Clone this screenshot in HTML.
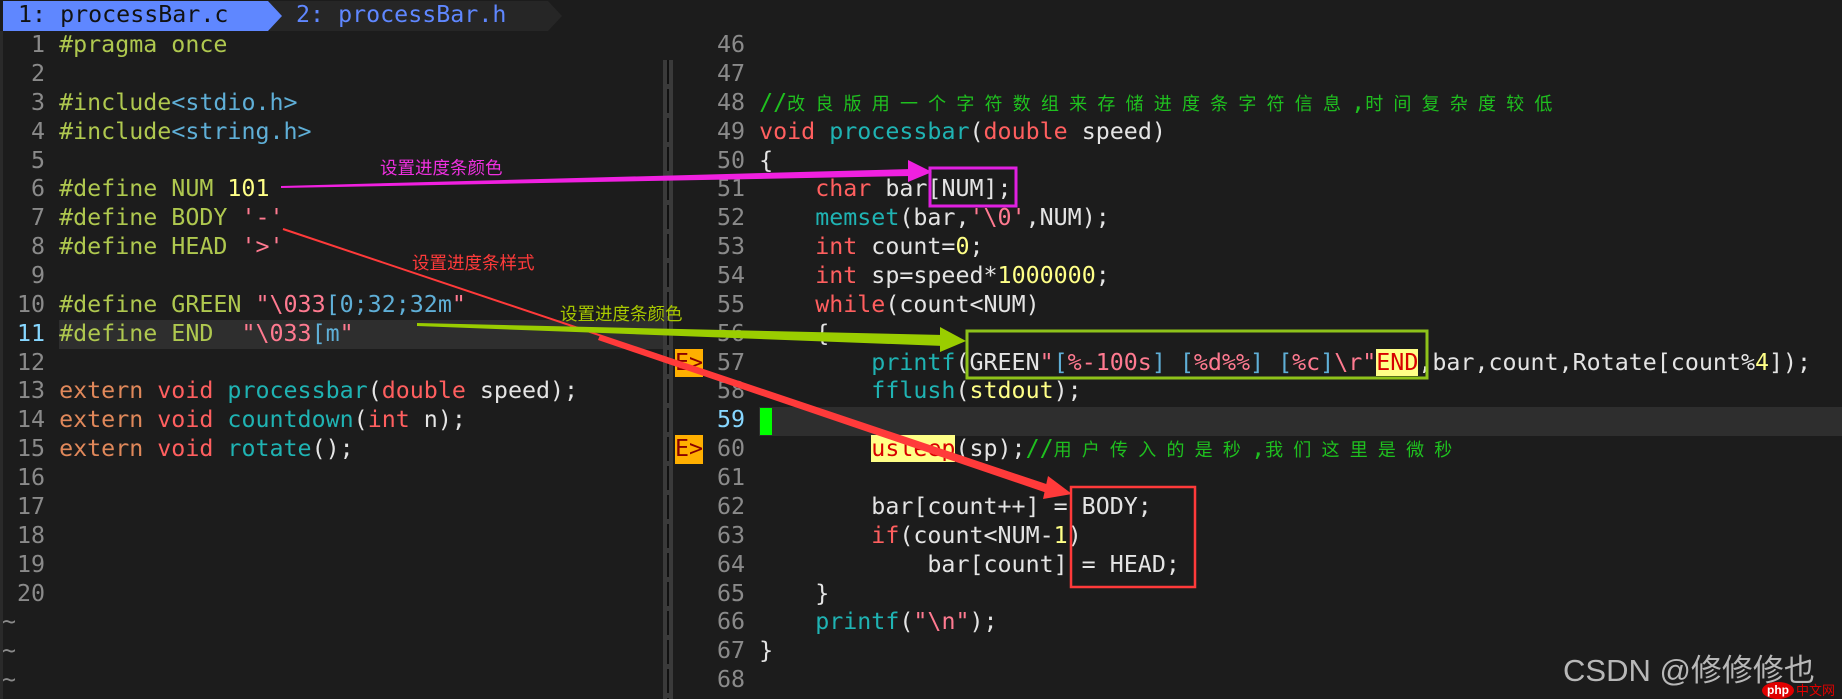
<!DOCTYPE html>
<html><head><meta charset="utf-8"><style>
body{margin:0;width:1842px;height:699px;background:#1c1c1c;overflow:hidden;position:relative;font-family:"DejaVu Sans Mono","Liberation Mono","Noto Sans CJK SC",monospace;font-size:23.3px;color:#e4e4e4}
.r{position:absolute;height:28.87px;line-height:28.87px;white-space:pre}
.n{color:#8a8a8a}.cn{color:#87d7ff}
.pp{color:#afc84f}.st{color:#5fafd7}.nu{color:#ffff87}.ch{color:#ff7a90}
.kw{color:#ff5f5f}.ex{color:#e0885a}.fn{color:#1fb3b3}.cm{color:#1fc01f}
.cj{font-size:18px;letter-spacing:10.2px}
.hl{background:#ffff87;color:#d70000}
.sign{background:#ffaf00;color:#870000}
.ann{position:absolute;font-family:"Liberation Sans","Noto Sans CJK SC",sans-serif;font-size:17.5px;white-space:nowrap}
</style></head><body>
<div style="position:absolute;left:0;top:0;width:1842px;height:31px;background:#1c1c1c"></div>
<svg style="position:absolute;left:0;top:0" width="600" height="32">
<polygon points="270,1 548,1 562,16 548,31 270,31" fill="#262626"/>
<polygon points="3,1 268,1 282,16 268,31 3,31" fill="#5f87ff"/>
</svg>
<div class="r" style="left:18px;top:1px;color:#121212">1: processBar.c</div>
<div class="r" style="left:296px;top:1px;color:#5f87ff">2: processBar.h</div>
<div style="position:absolute;left:0;top:31px;width:3px;height:668px;background:#2a2a2a"></div>
<div style="position:absolute;left:59px;top:320px;width:604px;height:29px;background:#2e2e2e"></div>
<div style="position:absolute;left:759px;top:407px;width:1083px;height:29px;background:#2e2e2e"></div>
<div style="position:absolute;left:663px;top:60px;width:10px;height:639px;background:#3a3a3a"></div>
<div style="position:absolute;left:667px;top:60px;width:2px;height:639px;background:repeating-linear-gradient(#111 0 24px,#3a3a3a 24px 29px)"></div>

<div class="r" style="left:17px;top:31px"><span class="n"> 1</span> <span class="pp">#pragma once</span></div>
<div class="r" style="left:17px;top:59.9px"><span class="n"> 2</span></div>
<div class="r" style="left:17px;top:88.7px"><span class="n"> 3</span> <span class="pp">#include</span><span class="st">&lt;stdio.h&gt;</span></div>
<div class="r" style="left:17px;top:117.6px"><span class="n"> 4</span> <span class="pp">#include</span><span class="st">&lt;string.h&gt;</span></div>
<div class="r" style="left:17px;top:146.5px"><span class="n"> 5</span></div>
<div class="r" style="left:17px;top:175.4px"><span class="n"> 6</span> <span class="pp">#define NUM </span><span class="nu">101</span></div>
<div class="r" style="left:17px;top:204.2px"><span class="n"> 7</span> <span class="pp">#define BODY </span><span class="ch">'-'</span></div>
<div class="r" style="left:17px;top:233.1px"><span class="n"> 8</span> <span class="pp">#define HEAD </span><span class="ch">'&gt;'</span></div>
<div class="r" style="left:17px;top:262px"><span class="n"> 9</span></div>
<div class="r" style="left:17px;top:290.8px"><span class="n">10</span> <span class="pp">#define GREEN </span><span class="ch">"\033</span><span class="st">[0;32;32m</span><span class="ch">"</span></div>
<div class="r" style="left:17px;top:319.7px"><span class="cn">11</span> <span class="pp">#define END  </span><span class="ch">"\033</span><span class="st">[m</span><span class="ch">"</span></div>
<div class="r" style="left:17px;top:348.6px"><span class="n">12</span></div>
<div class="r" style="left:17px;top:377.4px"><span class="n">13</span> <span class="ex">extern</span> <span class="kw">void</span> <span class="fn">processbar</span>(<span class="kw">double</span> speed);</div>
<div class="r" style="left:17px;top:406.3px"><span class="n">14</span> <span class="ex">extern</span> <span class="kw">void</span> <span class="fn">countdown</span>(<span class="kw">int</span> n);</div>
<div class="r" style="left:17px;top:435.2px"><span class="n">15</span> <span class="ex">extern</span> <span class="kw">void</span> <span class="fn">rotate</span>();</div>
<div class="r" style="left:17px;top:464px"><span class="n">16</span></div>
<div class="r" style="left:17px;top:492.9px"><span class="n">17</span></div>
<div class="r" style="left:17px;top:521.8px"><span class="n">18</span></div>
<div class="r" style="left:17px;top:550.7px"><span class="n">19</span></div>
<div class="r" style="left:17px;top:579.5px"><span class="n">20</span></div>
<div class="r n" style="left:2px;top:608.4px">~</div>
<div class="r n" style="left:2px;top:637.3px">~</div>
<div class="r n" style="left:2px;top:666.1px">~</div>

<div class="r" style="left:717px;top:31px"><span class="n">46</span></div>
<div class="r" style="left:717px;top:59.9px"><span class="n">47</span></div>
<div class="r" style="left:717px;top:88.7px"><span class="n">48</span> <span class="cm">//<span class="cj">改良版用一个字符数组来存储进度条字符信息</span>,<span class="cj">时间复杂度较低</span></span></div>
<div class="r" style="left:717px;top:117.6px"><span class="n">49</span> <span class="kw">void</span> <span class="fn">processbar</span>(<span class="kw">double</span> speed)</div>
<div class="r" style="left:717px;top:146.5px"><span class="n">50</span> {</div>
<div class="r" style="left:717px;top:175.4px"><span class="n">51</span>     <span class="kw">char</span> bar[NUM];</div>
<div class="r" style="left:717px;top:204.2px"><span class="n">52</span>     <span class="fn">memset</span>(bar,<span class="ch">'\0'</span>,NUM);</div>
<div class="r" style="left:717px;top:233.1px"><span class="n">53</span>     <span class="kw">int</span> count=<span class="nu">0</span>;</div>
<div class="r" style="left:717px;top:262px"><span class="n">54</span>     <span class="kw">int</span> sp=speed*<span class="nu">1000000</span>;</div>
<div class="r" style="left:717px;top:290.8px"><span class="n">55</span>     <span class="kw">while</span>(count&lt;NUM)</div>
<div class="r" style="left:717px;top:319.7px"><span class="n">56</span>     {</div>
<div class="r" style="left:717px;top:348.6px"><span class="n">57</span>         <span class="fn">printf</span>(GREEN<span class="ch">"</span><span class="st">[</span><span class="ch">%-100s</span><span class="st">] [</span><span class="ch">%d%%</span><span class="st">] [</span><span class="ch">%c</span><span class="st">]</span><span class="ch">\r"</span><span class="hl">END</span>,bar,count,Rotate[count%<span class="nu">4</span>]);</div>
<div class="r" style="left:717px;top:377.4px"><span class="n">58</span>         <span class="fn">fflush</span>(<span class="nu">stdout</span>);</div>
<div class="r" style="left:717px;top:406.3px"><span class="cn">59</span></div>
<div class="r" style="left:717px;top:435.2px"><span class="n">60</span>         <span class="hl">usleep</span>(sp);<span class="cm">//<span class="cj">用户传入的是秒</span>,<span class="cj">我们这里是微秒</span></span></div>
<div class="r" style="left:717px;top:464px"><span class="n">61</span></div>
<div class="r" style="left:717px;top:492.9px"><span class="n">62</span>         bar[count++] = BODY;</div>
<div class="r" style="left:717px;top:521.8px"><span class="n">63</span>         <span class="kw">if</span>(count&lt;NUM-<span class="nu">1</span>)</div>
<div class="r" style="left:717px;top:550.7px"><span class="n">64</span>             bar[count] = HEAD;</div>
<div class="r" style="left:717px;top:579.5px"><span class="n">65</span>     }</div>
<div class="r" style="left:717px;top:608.4px"><span class="n">66</span>     <span class="fn">printf</span>(<span class="ch">"\n"</span>);</div>
<div class="r" style="left:717px;top:637.3px"><span class="n">67</span> }</div>
<div class="r" style="left:717px;top:666.1px"><span class="n">68</span></div>
<div class="r sign" style="left:675px;top:348.6px;width:28px">E&gt;</div>
<div class="r sign" style="left:675px;top:435.2px;width:28px">E&gt;</div>
<div style="position:absolute;left:760px;top:408px;width:12px;height:27px;background:#00ff00"></div>

<svg style="position:absolute;left:0;top:0" width="1842" height="699">
<polygon points="281,186 912,169 912,176 281,188" fill="#f020e0"/>
<polygon points="908,160 932,172 908,182" fill="#f020e0"/>
<rect x="930" y="168" width="86" height="38" fill="none" stroke="#e020e0" stroke-width="3"/>
<line x1="283" y1="229" x2="1052" y2="487" stroke="#ff3a3a" stroke-width="2"/>
<polygon points="600,335 1052,487 1050,494 598,340" fill="#ff3a3a"/>
<polygon points="1048,476 1072,494 1043,499" fill="#ff3a3a"/>
<rect x="1071" y="487" width="124" height="100" fill="none" stroke="#ff3a3a" stroke-width="2.5"/>
<polygon points="417,323 944,335 944,346 417,326" fill="#9acd00"/>
<polygon points="940,327 966,341 940,352" fill="#9acd00"/>
<rect x="967" y="331" width="460" height="47" fill="none" stroke="#8ec21a" stroke-width="3"/>
</svg>
<div class="ann" style="left:380px;top:155px;color:#f030e0">设置进度条颜色</div>
<div class="ann" style="left:412px;top:250px;color:#ff3a3a">设置进度条样式</div>
<div class="ann" style="left:560px;top:301px;color:#a8c800">设置进度条颜色</div>
<div style="position:absolute;left:1563px;top:645px;font-family:'Liberation Sans','Noto Sans CJK SC',sans-serif;font-size:31px;color:#b8b8b8;white-space:nowrap">CSDN @修修修也</div>
<div style="position:absolute;left:1762px;top:682px;width:32px;height:17px;border-radius:50%;background:#e00000;color:#fff;font:bold 12px 'Liberation Sans',sans-serif;text-align:center;line-height:17px">php</div>
<div style="position:absolute;left:1796px;top:680px;font:13px 'Noto Sans CJK SC',sans-serif;color:#e00000">中文网</div>
</body></html>
